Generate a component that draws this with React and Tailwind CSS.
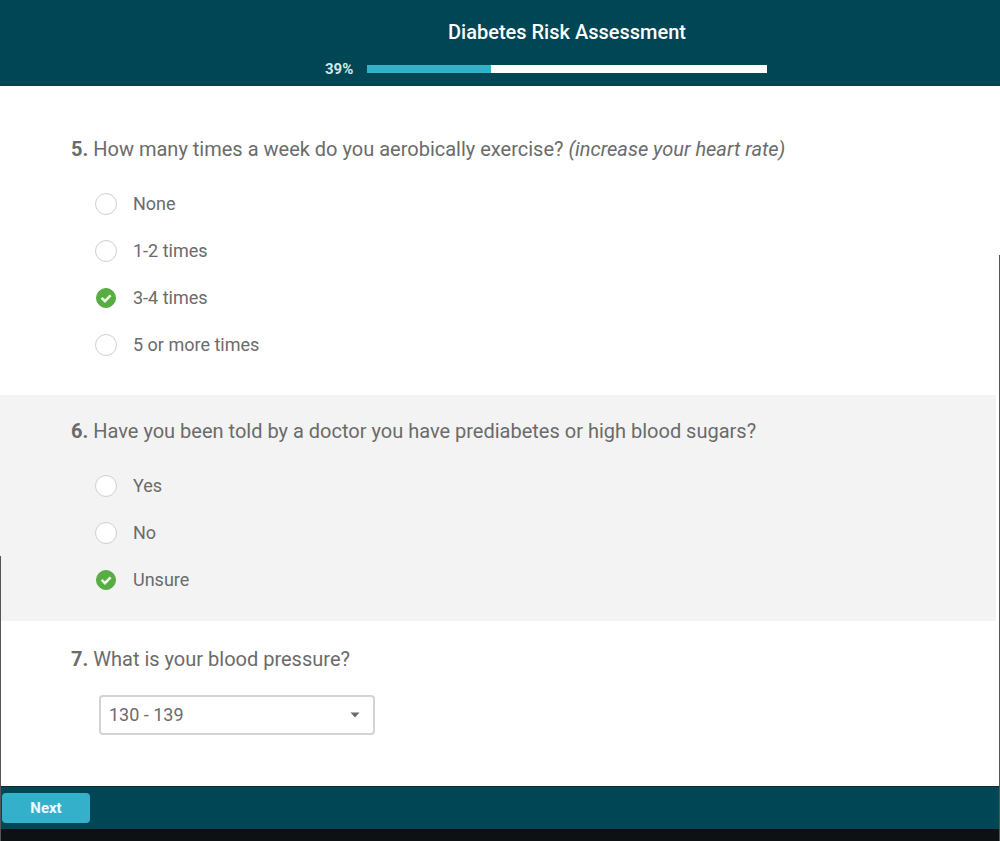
import React, { useState } from 'react'

function CheckMark(){
  return (
    <svg viewBox="0 0 22 22" aria-hidden="true" className="pointer-events-none invisible col-start-1 row-start-1 size-[22px] peer-checked:visible">
      <path d="M6.6 10.8l3.4 3.4 5.6-5.8" fill="none" stroke="#eaffe6" strokeWidth="2.6" />
    </svg>
  )
}

function RadioGroup({ name, labelledBy, options, value, onChange }){
  return (
    <div role="radiogroup" aria-labelledby={labelledBy} className="mt-[31px] ml-6 flex flex-col items-start gap-[23px]">
      {options.map(option=> (
        <label key={option} className="flex h-6 items-center gap-4 text-lg leading-6">
          <span className="grid size-[22px] place-items-center">
            <input
              type="radio"
              name={name}
              value={option}
              checked={value === option}
              onChange={()=>onChange(option)}
              className="peer col-start-1 row-start-1 size-[22px] appearance-none rounded-full border border-[#d0d0d0] bg-white checked:size-5 checked:border-[#58ad42] checked:bg-[#58ad42]"
            />
            <CheckMark />
          </span>
          {option}
        </label>
      ))}
    </div>
  )
}

function Title({ id, number, children }){
  return (
    <h2 id={id} className="text-xl leading-6 font-normal">
      <b>{number}.</b> {children}
    </h2>
  )
}

export default function App(){
  const [exercise, setExercise] = useState('3-4 times')
  const [told, setTold] = useState('Unsure')
  const [pressure, setPressure] = useState('130 - 139')
  const filled = 31

  return (
    <div className="relative flex min-h-screen flex-col bg-white font-[Roboto,sans-serif] text-[#6b6b6b]">
      <header className="grid grid-cols-[30px_minmax(0,400px)] justify-center gap-x-3 gap-y-4 bg-[#004654] pt-5 pb-2 pl-[92px] text-white">
        <h1 className="col-start-2 text-center text-xl leading-6 font-medium">Diabetes Risk Assessment</h1>
        <span id="progress" className="text-[15px] leading-[18px] font-bold text-[#cfe9ee]">39%</span>
        <div role="progressbar" aria-labelledby="progress" aria-valuenow={39} className="col-start-2 h-2 self-center bg-white">
          <div className="h-full bg-[#35b0ca]" style={{ width: `${filled}%` }} />
        </div>
      </header>

      <main className="flex-1">
        <section className="px-[71px] pt-[51px] pb-[38px]">
          <Title id="q5" number={5}>How many times a week do you aerobically exercise? <i>(increase your heart rate)</i></Title>
          <RadioGroup name="exercise" labelledBy="q5" options={['None', '1-2 times', '3-4 times', '5 or more times']} value={exercise} onChange={setExercise} />
        </section>

        <section className="mr-1 bg-[#f3f3f3] px-[71px] pt-6 pb-[29px]">
          <Title id="q6" number={6}>Have you been told by a doctor you have prediabetes or high blood sugars?</Title>
          <RadioGroup name="told" labelledBy="q6" options={['Yes', 'No', 'Unsure']} value={told} onChange={setTold} />
        </section>

        <section className="px-[71px] pt-[26px] pb-[51px]">
          <Title id="q7" number={7}>What is your blood pressure?</Title>
          <div className="mt-6 ml-7 grid max-w-[276px] items-center">
            <select
              aria-labelledby="q7"
              value={pressure}
              onChange={e=>setPressure(e.target.value)}
              className="col-start-1 row-start-1 h-10 w-full appearance-none rounded-sm border-2 border-[#d3d3d3] bg-white px-2 text-lg"
            >
              <option>Below 120</option>
              <option>120 - 129</option>
              <option>130 - 139</option>
              <option>140 or above</option>
            </select>
            <svg viewBox="0 0 10 6" aria-hidden="true" className="pointer-events-none col-start-1 row-start-1 mr-[15px] h-[6px] w-[10px] justify-self-end">
              <path d="M0.5 0.5h9L5 5.5z" fill="#6b6b6b" />
            </svg>
          </div>
        </section>
      </main>

      <footer className="border-t border-b-12 border-t-[#0b2a33] border-b-[#0d1113] bg-[#004654] py-[6px] pl-[2px]">
        <button type="button" className="block h-[30px] w-22 rounded-sm bg-[#35b0ca] text-[15px] font-bold text-[#eefbff]">Next</button>
      </footer>

      {/* thin window frame showing along both sides */}
      <div className="pointer-events-none absolute top-[556px] bottom-0 left-0 w-px bg-[#555]" />
      <div className="pointer-events-none absolute top-[255px] right-0 bottom-0 w-px bg-[#555]" />
    </div>
  )
}
